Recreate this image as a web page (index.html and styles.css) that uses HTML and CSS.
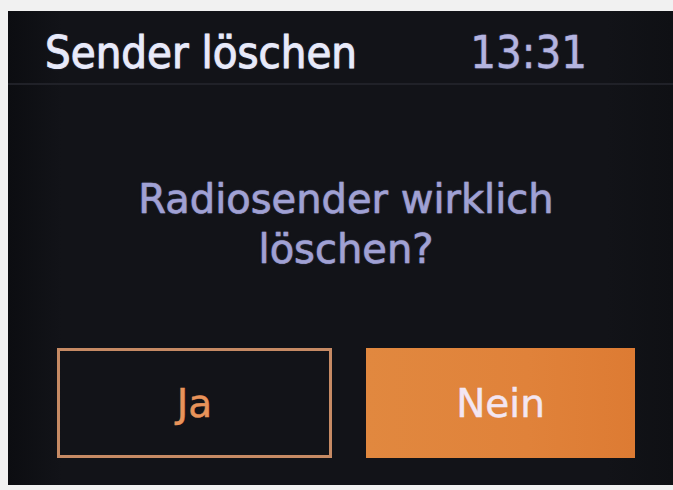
FILE: index.html
```html
<!DOCTYPE html>
<html lang="de">
<head>
<meta charset="utf-8">
<title>Sender löschen</title>
<link rel="stylesheet" href="styles.css">
</head>
<body>
<div class="screen">
  <header class="topbar">
    <span class="title">Sender löschen</span>
    <span class="clock">13:31</span>
  </header>
  <main class="dialog">
    <p class="question">Radiosender wirklich<br>löschen?</p>
    <div class="actions">
      <button class="btn btn-yes">Ja</button>
      <button class="btn btn-no">Nein</button>
    </div>
  </main>
</div>
</body>
</html>
```

FILE: styles.css
```css
html, body {
  margin: 0;
  padding: 0;
}

body {
  width: 673px;
  height: 490px;
  background: #f1f1f1;
  overflow: hidden;
  font-family: "DejaVu Sans", "Liberation Sans", sans-serif;
}

.screen {
  margin: 11px 0 0 8px;
  width: 665px;
  height: 474px;
  background: linear-gradient(90deg, #0c0d11 0%, #121318 8%, #121318 90%, #0f1014 100%);
  display: flex;
  flex-direction: column;
}

.topbar {
  display: flex;
  align-items: baseline;
  padding: 17px 86px 5px 37px;
  height: 50px;
  border-bottom: 2px solid #202128;
  font-family: "DejaVu Sans Condensed", "DejaVu Sans", sans-serif;
  font-stretch: condensed;
  font-size: 45px;
  line-height: 50px;
}

.title {
  color: #e8eafa;
  -webkit-text-stroke: 0.9px #e8eafa;
  text-shadow: 0 0 2px rgba(200, 205, 255, 0.5);
}

.clock {
  margin-left: auto;
  color: #b4b4e0;
  -webkit-text-stroke: 0.4px #b4b4e0;
  text-shadow: 0 0 2px rgba(170, 170, 230, 0.5);
}

.dialog {
  display: flex;
  flex-direction: column;
  padding: 0 38px 0 49px;
}

.question {
  margin: 89px 0 0;
  text-align: center;
  font-size: 40px;
  line-height: 50px;
  color: #a0a1d4;
  -webkit-text-stroke: 0.6px #a0a1d4;
  text-shadow: 0 0 2px rgba(150, 150, 210, 0.5);
}

.actions {
  display: flex;
  gap: 34px;
  margin-top: 74px;
}

.btn {
  flex: 1;
  height: 110px;
  margin: 0;
  font-family: "DejaVu Sans", sans-serif;
  font-size: 39px;
  line-height: 1;
  cursor: pointer;
}

.btn-yes {
  background: transparent;
  border: 3px solid #c68a64;
  color: #e8935a;
  -webkit-text-stroke: 0.5px #e8935a;
}

.btn-no {
  border: none;
  background: linear-gradient(90deg, #e1883f 0%, #e0823a 60%, #dd7b33 100%);
  color: #f3e6f2;
  -webkit-text-stroke: 0.5px #f3e6f2;
}
```
